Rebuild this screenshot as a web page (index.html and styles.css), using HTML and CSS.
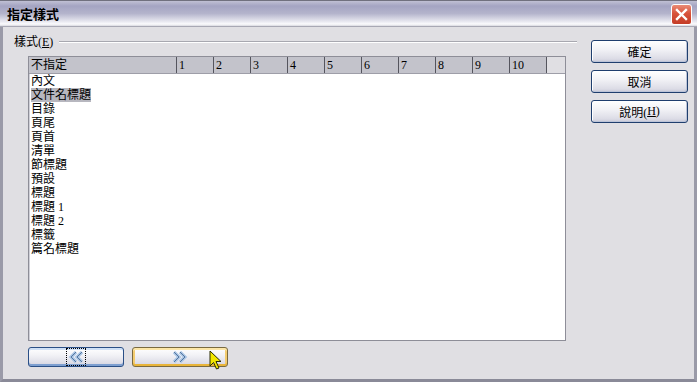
FILE: index.html
```html
<!DOCTYPE html>
<html>
<head>
    <title>指定樣式</title>
    <link rel="stylesheet" href="styles.css">
</head>
<body>
    <div class="window">
        <div class="titlebar">
            <span class="title">指定樣式</span>
            <button class="close-btn" aria-label="close">
                <svg width="13" height="13" viewBox="0 0 13 13">
                    <path d="M2 2 L11 11 M11 2 L2 11" stroke="#fff" stroke-width="2.4" stroke-linecap="square"/>
                </svg>
            </button>
        </div>

        <div class="content">
            <div class="main">
                <div class="group-head">
                    <span class="group-label">樣式(<u>E</u>)</span>
                    <span class="group-line"></span>
                </div>

                <div class="listbox">
                    <div class="list-header">
                        <div class="col col-name">不指定</div>
                        <div class="col">1</div>
                        <div class="col">2</div>
                        <div class="col">3</div>
                        <div class="col">4</div>
                        <div class="col">5</div>
                        <div class="col">6</div>
                        <div class="col">7</div>
                        <div class="col">8</div>
                        <div class="col">9</div>
                        <div class="col">10</div>
                        <div class="col-fill"></div>
                    </div>
                    <ul class="rows">
                        <li><span>內文</span></li>
                        <li><span class="selected">文件名標題</span></li>
                        <li><span>目錄</span></li>
                        <li><span>頁尾</span></li>
                        <li><span>頁首</span></li>
                        <li><span>清單</span></li>
                        <li><span>節標題</span></li>
                        <li><span>預設</span></li>
                        <li><span>標題</span></li>
                        <li><span>標題 1</span></li>
                        <li><span>標題 2</span></li>
                        <li><span>標籤</span></li>
                        <li><span>篇名標題</span></li>
                    </ul>
                </div>

                <div class="move-buttons">
                    <button class="xp-btn move-btn">
                        <span class="focus-ring">
                            <svg width="18" height="12" viewBox="0 0 18 12">
                                <path d="M9 1 L4 6 L9 11 M15 1 L10 6 L15 11" fill="none" stroke="#a8c4e4" stroke-width="3.2"/>
                                <path d="M9 1 L4 6 L9 11 M15 1 L10 6 L15 11" fill="none" stroke="#56769e" stroke-width="1"/>
                            </svg>
                        </span>
                    </button>
                    <button class="xp-btn move-btn hot">
                        <svg width="18" height="12" viewBox="0 0 18 12">
                            <path d="M3 1 L8 6 L3 11 M9 1 L14 6 L9 11" fill="none" stroke="#a8c4e4" stroke-width="3.2"/>
                            <path d="M3 1 L8 6 L3 11 M9 1 L14 6 L9 11" fill="none" stroke="#56769e" stroke-width="1"/>
                        </svg>
                    </button>
                </div>
            </div>

            <div class="side">
                <button class="xp-btn side-btn">確定</button>
                <button class="xp-btn side-btn">取消</button>
                <button class="xp-btn side-btn">說明(<u>H</u>)</button>
            </div>
        </div>

        <svg class="cursor" width="14" height="22" viewBox="0 0 14 22">
            <path d="M1 1 L1 16 L4.5 12.5 L7.5 19 L10 18 L7 11.5 L12 11.5 Z" fill="#f2e600" stroke="#2a2a00" stroke-width="1"/>
        </svg>
    </div>
</body>
</html>
```

FILE: styles.css
```css
body {
    margin: 0;
    font-family: "Liberation Serif", "Noto Sans CJK TC", serif;
    font-size: 12px;
    color: #000;
}
.window {
    position: relative;
    width: 697px;
    height: 382px;
    box-sizing: border-box;
    background-color: #e0dfe3;
    border-bottom: 3px solid #8a8a98;
    border-left: 3px solid #9a9aa8;
    border-right: 3px solid #9a9aa8;
    display: flex;
    flex-direction: column;
}
.titlebar {
    height: 27px;
    margin: 0 -3px;
    box-sizing: border-box;
    border-top: 1px solid #70707e;
    border-bottom: 1px solid #a8a8b4;
    background: linear-gradient(to bottom, #c0c0d4 0%, #a4a4c2 20%, #b4b4cc 50%, #e8e8f0 82%, #fbfbfd 92%, #d8d8e0 100%);
    display: flex;
    align-items: center;
    justify-content: space-between;
    padding: 0 5px 0 7px;
}
.title {
    font-weight: bold;
    font-size: 13px;
    color: #000;
}
.close-btn {
    width: 21px;
    height: 21px;
    margin-top: 2px;
    padding: 0;
    border: 1px solid #fff;
    border-radius: 3px;
    background: linear-gradient(to bottom, #e98a76 0%, #d8523a 45%, #c43c26 100%);
    display: flex;
    align-items: center;
    justify-content: center;
}
.content {
    flex: 1;
    display: flex;
    padding: 8px 0 0 11px;
}
.main {
    width: 563px;
    display: flex;
    flex-direction: column;
}
.group-head {
    display: flex;
    align-items: center;
    height: 14px;
}
.group-label {
    line-height: 14px;
    padding-right: 6px;
}
.group-line {
    flex: 1;
    border-top: 1px solid #a8a8b0;
    border-bottom: 1px solid #fff;
}
.listbox {
    margin: 7px 0 0 14px;
    width: 538px;
    height: 285px;
    box-sizing: border-box;
    border: 1px solid #8e8e98;
    background-color: #fff;
    box-shadow: inset 1px 1px 0 #d0d0d8;
    overflow: hidden;
}
.list-header {
    display: flex;
    height: 16px;
    background-color: #c3c3cb;
    border-bottom: 1px solid #9e9ea8;
}
.col {
    width: 37px;
    box-sizing: border-box;
    border-left: 1px solid #55555e;
    padding-left: 2px;
    line-height: 16px;
}
.col-name {
    width: 147px;
    border-left: none;
}
.col-fill {
    flex: 1;
    border-left: 1px solid #55555e;
    background-color: #e0dfe3;
}
.rows {
    list-style: none;
    margin: 0;
    padding: 0 0 0 2px;
}
.rows li {
    height: 14px;
    line-height: 14px;
}
.rows span.selected {
    background-color: #b7b7bf;
}
.move-buttons {
    display: flex;
    gap: 8px;
    margin: 6px 0 0 14px;
}
.xp-btn {
    font-family: "Liberation Serif", "Noto Sans CJK TC", serif;
    font-size: 12px;
    color: #000;
    padding: 0;
    border: 1px solid #1f3e6e;
    border-radius: 3px;
    background: linear-gradient(to bottom, #ffffff 0%, #f2f2f6 40%, #dcdce6 85%, #c8c8d6 100%);
    box-shadow: inset -1px -1px 0 #bcc4d8, inset 1px 1px 0 #fff;
    display: flex;
    align-items: center;
    justify-content: center;
}
.move-btn {
    width: 96px;
    height: 20px;
    border-color: #2a4f86;
    box-shadow: inset 0 -2px 0 #7d9fd0, inset 0 2px 0 #cfe0f6;
}
.move-btn.hot {
    border-color: #7a6a40;
    box-shadow: inset 0 -2px 0 #e8b43a, inset 0 2px 0 #fce6a8, inset 2px 0 0 #f4cc70, inset -2px 0 0 #f4cc70;
}
.focus-ring {
    display: flex;
    align-items: center;
    justify-content: center;
    width: 18px;
    height: 16px;
    outline: 1px dotted #000;
}
.side {
    display: flex;
    flex-direction: column;
    gap: 7px;
    margin: 5px 0 0 14px;
}
.side-btn {
    width: 97px;
    height: 23px;
}
.cursor {
    position: absolute;
    left: 206px;
    top: 350px;
}
```
